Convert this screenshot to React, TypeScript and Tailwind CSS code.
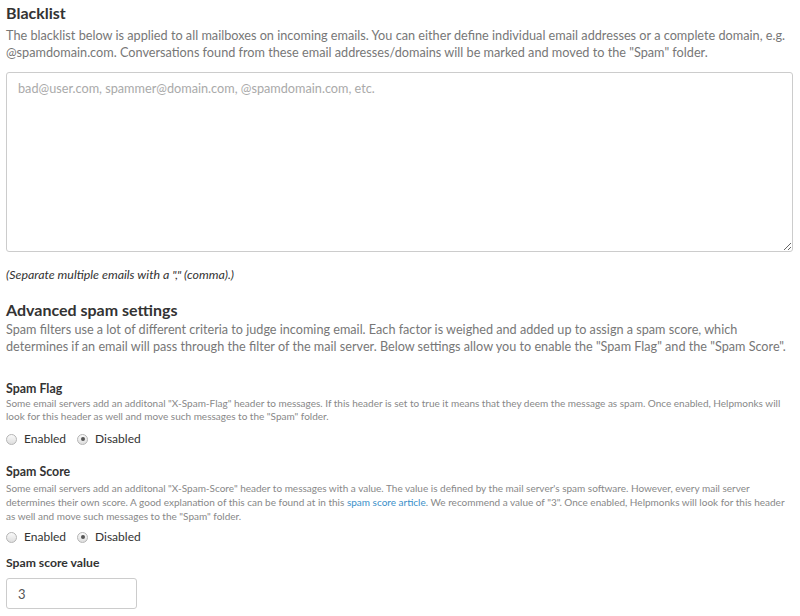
export default function App() {
  return (
    <div className="bg-white pl-[6px] pr-[7px] pt-[2px] font-['Lato','Liberation_Sans',sans-serif] text-[#333]">
      <h3 className="text-[16px] font-bold leading-[22px]">Blacklist</h3>
      <p className="mt-[3px] text-[12.7px] leading-[17px] text-[#777]">
        The blacklist below is applied to all mailboxes on incoming emails. You can either define individual email addresses or a complete domain, e.g. @spamdomain.com. Conversations found from these email addresses/domains will be marked and moved to the "Spam" folder.
      </p>
      <textarea
        className="mt-[11px] block h-[180px] w-full resize-y rounded-[3px] border border-[#ccc] px-[11px] py-[6px] text-[12.7px] leading-[18px] text-[#555] placeholder:text-[#aaa] outline-none"
        placeholder="bad@user.com, spammer@domain.com, @spamdomain.com, etc."
      />
      <p className="mt-[15px] text-[12.4px] italic leading-[16px] text-[#333]">
        (Separate multiple emails with a "," (comma).)
      </p>

      <h3 className="mt-[16px] text-[16px] font-bold leading-[22px]">Advanced spam settings</h3>
      <p className="text-[12.65px] leading-[17px] text-[#777]">
        Spam filters use a lot of different criteria to judge incoming email. Each factor is weighed and added up to assign a spam score, which determines if an email will pass through the filter of the mail server. Below settings allow you to enable the "Spam Flag" and the "Spam Score".
      </p>

      <h4 className="mt-[26px] text-[12.4px] font-bold leading-[16px]">Spam Flag</h4>
      <p className="text-[10px] leading-[13px] text-[#888]">
        Some email servers add an additonal "X-Spam-Flag" header to messages. If this header is set to true it means that they deem the message as spam. Once enabled, Helpmonks will look for this header as well and move such messages to the "Spam" folder.
      </p>
      <RadioRow className="mt-[8px]" />

      <h4 className="mt-[17px] text-[12.4px] font-bold leading-[16px]">Spam Score</h4>
      <p className="mt-[1px] text-[10px] leading-[14px] text-[#888]">
        Some email servers add an additonal "X-Spam-Score" header to messages with a value. The value is defined by the mail server's spam software. However, every mail server determines their own score. A good explanation of this can be found at in this <span className="text-[#3a8fc9]">spam score article</span>. We recommend a value of "3". Once enabled, Helpmonks will look for this header as well and move such messages to the "Spam" folder.
      </p>
      <RadioRow className="mt-[6px]" />

      <h4 className="mt-[10px] text-[12.2px] font-bold leading-[16px]">Spam score value</h4>
      <input
        className="mt-[7px] block h-[31px] w-[131px] rounded-[3px] border border-[#ccc] px-[11px] text-[13px] text-[#555] outline-none"
        defaultValue="3"
      />
    </div>
  );
}

function RadioRow({ className }: { className: string }) {
  return (
    <div className={`${className} flex items-center gap-[11px] text-[12px] leading-[16px] text-[#333]`}>
      <label className="flex items-center gap-[7px]">
        <Radio checked={false} />
        Enabled
      </label>
      <label className="flex items-center gap-[7px]">
        <Radio checked />
        Disabled
      </label>
    </div>
  );
}

function Radio({ checked }: { checked: boolean }) {
  return (
    <span className="flex h-[11px] w-[11px] items-center justify-center rounded-full border border-[#b5b5b5] bg-gradient-to-b from-[#fafafa] to-[#dedede]">
      {checked && <span className="h-[4px] w-[4px] rounded-full bg-[#555]" />}
    </span>
  );
}
